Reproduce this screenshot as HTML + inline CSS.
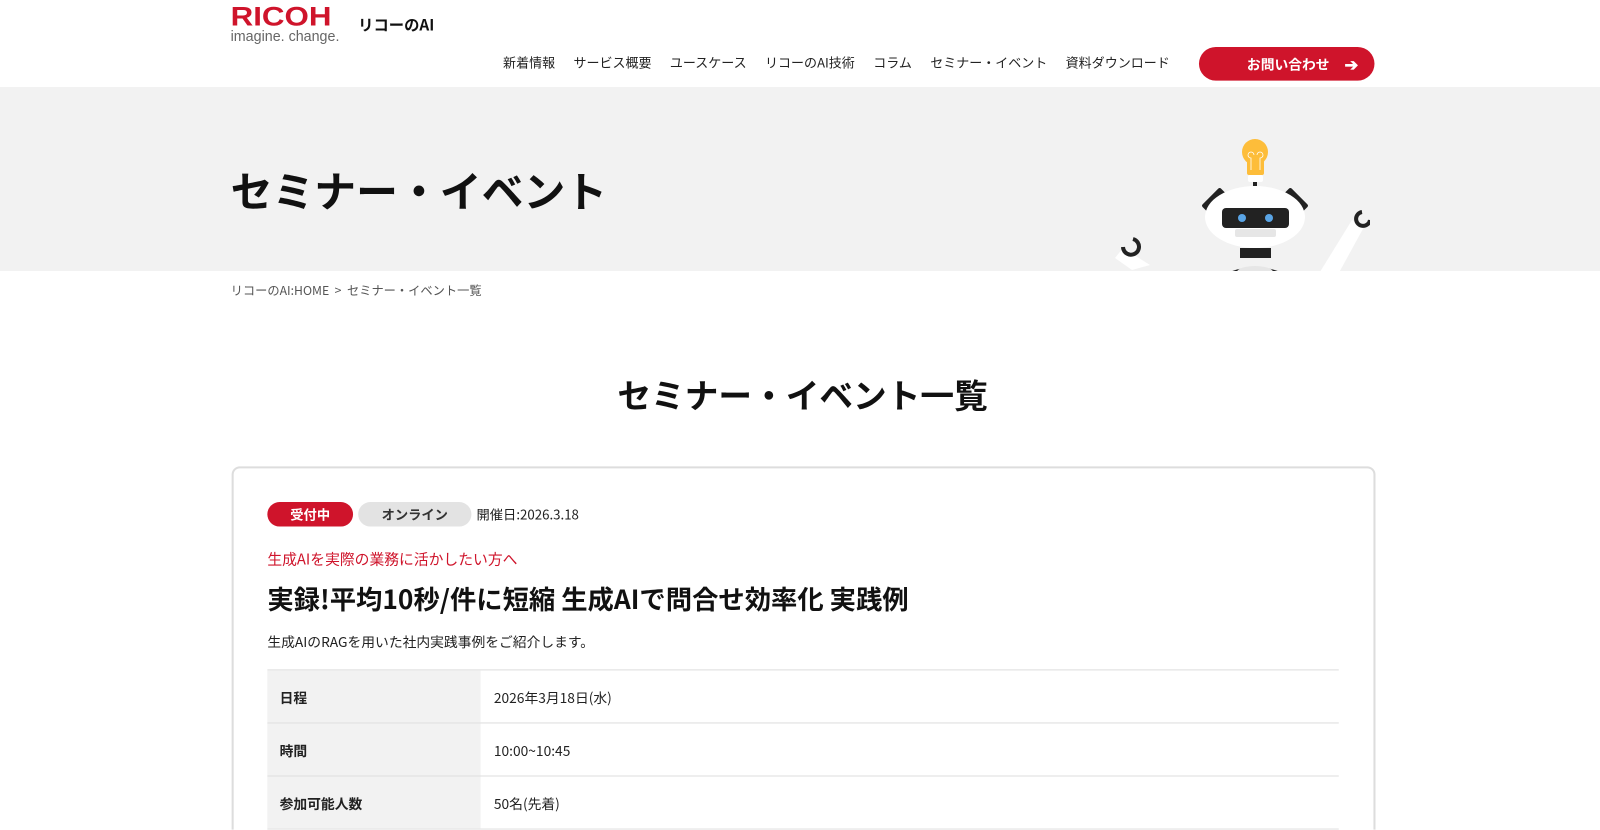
<!DOCTYPE html>
<html style="overflow:hidden;height:830px"><head><meta charset="utf-8"><style>
*{margin:0;padding:0;box-sizing:border-box}
body{width:1600px;height:830px;overflow:hidden;background:#fff;font-family:"Noto Sans CJK JP","Liberation Sans",sans-serif;color:#222;position:relative}
.abs{position:absolute}
#w{position:absolute;left:0;top:0;width:1568px;height:813px;overflow:hidden;transform:scale(1.0204);transform-origin:0 0}
.nav span{margin-right:18px}
.row{display:flex;height:52px;border-bottom:1px solid #ddd;font-size:13.5px;align-items:stretch}
.row .l{width:209px;background:#f2f2f2;padding-left:12px;font-weight:bold;display:flex;align-items:center}
.row .r{padding-left:13px;display:flex;align-items:center}
</style></head><body>
<div class="abs" style="left:0;top:87px;width:1600px;height:184px;background:#f2f2f2"></div>
<div id="w">
<div class="abs" style="left:226px;top:1px;font-family:'Liberation Sans',sans-serif;font-weight:bold;color:#cf142b;font-size:26px;transform:scaleX(1.18);transform-origin:left">RICOH</div>
<div class="abs" style="left:226px;top:27px;font-family:'Liberation Sans',sans-serif;font-size:14px;color:#666">imagine. change.</div>
<div class="abs" style="left:351px;top:14px;font-size:15px;font-weight:bold;color:#111">リコーのAI</div>
<div class="abs nav" style="left:493px;top:51px;font-size:12.75px;color:#222;white-space:nowrap"><span>新着情報</span><span>サービス概要</span><span>ユースケース</span><span>リコーのAI技術</span><span>コラム</span><span>セミナー・イベント</span><span>資料ダウンロード</span></div>
<div class="abs" style="left:1175px;top:46px;width:172px;height:33px;border-radius:17px;background:#cf142b;color:#fff;font-size:13.5px;font-weight:bold;line-height:33px;padding-left:47px">お問い合わせ<span style="position:absolute;right:16px;top:0;font-size:16px">➔</span></div>
<div class="abs" style="left:226px;top:159px;font-size:41px;font-weight:bold;color:#111;line-height:1.3">セミナー・イベント</div>
<div class="abs" style="left:226px;top:276px;font-size:12px;color:#555">リコーのAI:HOME &nbsp;&gt;&nbsp; セミナー・イベント一覧</div>
<div class="abs" style="left:0;top:365px;width:1573px;text-align:center;font-size:33px;font-weight:bold;color:#111;line-height:1.3">セミナー・イベント一覧</div>
<div class="abs" style="left:227px;top:457px;width:1121px;height:420px;border:2px solid #ddd;border-radius:8px"></div>
<div class="abs" style="left:262px;top:492px;width:84px;height:24px;border-radius:12px;background:#cf142b;color:#fff;font-size:13px;font-weight:bold;text-align:center;line-height:24px">受付中</div>
<div class="abs" style="left:351px;top:492px;width:111px;height:24px;border-radius:12px;background:#e3e3e3;color:#333;font-size:13px;font-weight:bold;text-align:center;line-height:24px">オンライン</div>
<div class="abs" style="left:467px;top:494px;font-size:13px;color:#222">開催日:2026.3.18</div>
<div class="abs" style="left:262px;top:537px;font-size:14.5px;color:#cf142b">生成AIを実際の業務に活かしたい方へ</div>
<div class="abs" style="left:262px;top:570px;font-size:25.8px;font-weight:bold;color:#111;line-height:1.3;white-space:nowrap">実録!平均10秒/件に短縮 生成AIで問合せ効率化 実践例</div>
<div class="abs" style="left:262px;top:618px;font-size:13.5px;color:#222">生成AIのRAGを用いた社内実践事例をご紹介します。</div>
<div class="abs" style="left:262px;top:656px;width:1050px;border-top:1px solid #ddd">
<div class="row"><div class="l">日程</div><div class="r">2026年3月18日(水)</div></div>
<div class="row"><div class="l">時間</div><div class="r">10:00~10:45</div></div>
<div class="row"><div class="l">参加可能人数</div><div class="r">50名(先着)</div></div>
<div class="row"><div class="l"></div></div>
</div>
</div>
<svg class="abs" style="left:1090px;top:120px" width="280" height="151">
<path d="M42 150 L25 138 L33 128 L60 145Z" fill="#fff"/>
<path d="M33 127 a8 8 0 1 0 10 -8" stroke="#222" stroke-width="4" fill="none"/>
<path d="M225 160 L262 100 L274 107 L245 160Z" fill="#fff"/>
<path d="M272 92 a7 7 0 1 0 8 8" stroke="#222" stroke-width="4" fill="none"/>
<circle cx="165" cy="32" r="13" fill="#fdbd3a"/><rect x="157" y="38" width="17" height="17" rx="2" fill="#fdbd3a"/>
<path d="M161 50 v-12 a3 3 0 1 1 3 -3 M170 50 v-12 a3 3 0 1 0 -3 -3" stroke="#fff" stroke-width="0.8" fill="none"/>
<rect x="158" y="55" width="15" height="7" rx="2" fill="#fff"/><rect x="163" y="62" width="4" height="4" fill="#222"/>
<rect x="119" y="67" width="10" height="26" rx="2" fill="#222" transform="rotate(45 124 80)"/>
<rect x="201" y="67" width="10" height="26" rx="2" fill="#222" transform="rotate(-45 206 80)"/>
<ellipse cx="165" cy="97" rx="50" ry="31" fill="#fff"/>
<rect x="132" y="88" width="67" height="20" rx="4" fill="#222"/>
<circle cx="152" cy="98" r="4" fill="#5aa5e6"/><circle cx="179" cy="98" r="4" fill="#5aa5e6"/>
<rect x="145" y="109" width="41" height="8" rx="2" fill="#e6e6e6"/>
<rect x="150" y="128" width="31" height="10" fill="#222"/>
<path d="M128 160 q37 -22 74 0" stroke="#222" stroke-width="4" fill="#fff"/>
<ellipse cx="165" cy="152" rx="18" ry="6" fill="#e6e6e6"/>
</svg>
</body></html>
